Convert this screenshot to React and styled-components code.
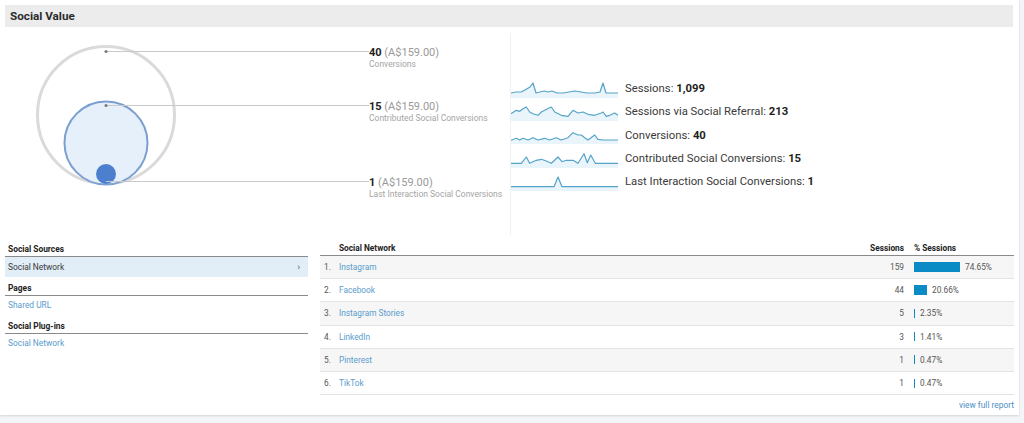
import React from "react";
import styled, { createGlobalStyle } from "styled-components";

const GlobalStyle = createGlobalStyle`
  html, body {
    margin: 0;
    padding: 0;
    background: #f3f5f8;
    font-family: Roboto, "Liberation Sans", Arial, sans-serif;
    color: #333;
  }
`;

const sparklines = [
  {
    label: "Sessions",
    value: "1,099",
    pts: [[0,13],[5,12],[10,12],[14,10],[19,7],[22,3],[25,13],[29,12],[33,11],[37,12],[41,11],[46,13],[52,13],[58,12],[64,11],[70,12],[76,13],[84,13],[89,12],[92,3],[95,13],[107,13]],
  },
  {
    label: "Sessions via Social Referral",
    value: "213",
    pts: [[0,10.7],[5.3,7.3],[8.7,8.3],[12,5.7],[15.3,4],[18.7,9],[22,10.7],[27,12.3],[30.3,9],[33.7,7.3],[38.7,4.7],[40.3,4],[43.7,9],[50.3,12.3],[57,13.3],[62,7.3],[67,10],[72,9],[77,11.3],[83.7,12.3],[90.3,10],[92,9],[95.3,13.3],[98.7,12.3],[103.7,10],[107,12.3]],
  },
  {
    label: "Conversions",
    value: "40",
    pts: [[0,14.3],[5.3,12.3],[8.7,14],[12,12.3],[17,14],[22,11.7],[27,14],[33.7,12.3],[38.7,14],[45.3,11.7],[50.3,14],[57,11.7],[62,6.7],[67,9],[70.3,9],[73.7,11.7],[77,14],[83.7,9],[87,13.3],[92,14],[107,14]],
  },
  {
    label: "Contributed Social Conversions",
    value: "15",
    pts: [[0,13.3],[10.3,13.3],[15.3,7],[18.7,13.3],[25.3,10.3],[30.3,9.3],[35.3,11],[40.3,13.3],[47,7],[51,11.7],[55.3,10.3],[62,10.3],[67,13.3],[73,3.7],[76.3,12.7],[79.7,5],[84.3,13.3],[107,13.3]],
  },
  {
    label: "Last Interaction Social Conversions",
    value: "1",
    pts: [[0,13.7],[43,13.7],[47,4],[51,13.7],[107,13.7]],
  },
];

const networks = [
  { name: "Instagram", sessions: 159, pct: 74.65 },
  { name: "Facebook", sessions: 44, pct: 20.66 },
  { name: "Instagram Stories", sessions: 5, pct: 2.35 },
  { name: "LinkedIn", sessions: 3, pct: 1.41 },
  { name: "Pinterest", sessions: 1, pct: 0.47 },
  { name: "TikTok", sessions: 1, pct: 0.47 },
];

const Page = styled.div`
  width: 1024px;
  height: 423px;
  overflow: hidden;
`;

const Card = styled.div`
  width: 1019px;
  height: 415px;
  background: #fff;
  box-shadow: 0 1px 2px rgba(0, 0, 0, 0.14);
  display: flex;
  flex-direction: column;
`;

const Header = styled.div`
  margin: 5px 6px 0 5px;
  height: 22px;
  background: #ececec;
  padding-left: 5px;
  font-size: 11.7px;
  font-weight: 700;
  line-height: 22px;
  color: #2b2b2b;
`;

const Top = styled.div`
  display: flex;
  height: 211px;
`;

const Diagram = styled.div`
  width: 510px;
  display: flex;
`;

const Callouts = styled.div`
  display: flex;
  flex-direction: column;
`;

const Callout = styled.div`
  margin-top: ${(p) => p.$top}px;
  height: 23px;
`;

const CalloutValue = styled.div`
  font-size: 11px;
  line-height: 12px;
  color: #9a9a9a;
  b {
    color: #222;
    font-weight: 700;
  }
`;

const CalloutLabel = styled.div`
  font-size: 8.5px;
  line-height: 11px;
  color: #a5a5a5;
`;

const Divider = styled.div`
  width: 1px;
  margin: 6px 0 3px;
  background: #f0f0f0;
`;

const Sparks = styled.div`
  display: flex;
  flex-direction: column;
  padding-top: 50px;
`;

const SparkRow = styled.div`
  display: flex;
  align-items: center;
  height: 23.3px;
  gap: 7px;
`;

const SparkLabel = styled.span`
  font-size: 11.3px;
  color: #3a3a3a;
  b {
    color: #1e1e1e;
    font-weight: 700;
  }
`;

const Bottom = styled.div`
  display: flex;
  padding: 0 5px;
  gap: 12px;
`;

const Sources = styled.div`
  width: 303px;
  display: flex;
  flex-direction: column;
`;

const SectionTitle = styled.div`
  padding: 4px 0 0 3px;
  font-size: 8.4px;
  font-weight: 700;
  line-height: 14px;
  color: #222;
  border-bottom: 1px solid #8a8a8a;
`;

const SelectedRow = styled.div`
  display: flex;
  justify-content: space-between;
  align-items: center;
  height: 20px;
  padding: 0 8px 0 3px;
  background: #e1edf7;
  font-size: 8.4px;
  color: #3a3a3a;
`;

const LinkRow = styled.div`
  height: 19px;
  line-height: 19px;
  padding-left: 3px;
  font-size: 8.4px;
  color: #5a9ccc;
`;

const Table = styled.div`
  flex: 1;
  display: flex;
  flex-direction: column;
`;

const Grid = styled.div`
  display: grid;
  grid-template-columns: 19px 1fr 80px 100px;
  align-items: center;
  height: ${(p) => (p.$head ? 18 : 23.2)}px;
  box-sizing: border-box;
  border-bottom: 1px solid ${(p) => (p.$head ? "#8a8a8a" : "#e4e4e4")};
  background: ${(p) => (p.$shade ? "#f6f6f6" : "#fff")};
  font-size: 8.3px;
  font-weight: ${(p) => (p.$head ? 700 : 400)};
  color: ${(p) => (p.$head ? "#222" : "#555")};
  padding-top: ${(p) => (p.$head ? 3 : 0)}px;
`;

const Index = styled.span`
  padding-left: 4px;
`;

const Name = styled.span`
  color: ${(p) => (p.$link ? "#5a9ccc" : "inherit")};
`;

const Num = styled.span`
  text-align: right;
  padding-right: 10px;
`;

const Pct = styled.span`
  display: flex;
  align-items: center;
  gap: 5px;
`;

const Bar = styled.span`
  display: inline-block;
  height: ${(p) => (p.$thin ? 9 : 10)}px;
  background: #0a8bc6;
`;

const Footer = styled.div`
  text-align: right;
  font-size: 8.4px;
  color: #4f8fc6;
  padding-top: 5px;
`;

function Venn() {
  return (
    <svg width="369" height="211" viewBox="0 0 369 211">
      <circle cx="106" cy="88" r="68.5" fill="#fff" stroke="#dadada" strokeWidth="3" />
      <circle cx="106" cy="116" r="41.5" fill="#e5f0fb" stroke="#7c9fd1" strokeWidth="2" />
      <circle cx="106" cy="147" r="10" fill="#4c80cf" />
      <line x1="106" y1="24.5" x2="369" y2="24.5" stroke="#c9c9c9" strokeWidth="1" />
      <line x1="106" y1="78.5" x2="369" y2="78.5" stroke="#c9c9c9" strokeWidth="1" />
      <line x1="106" y1="154.5" x2="369" y2="154.5" stroke="#c9c9c9" strokeWidth="1" />
      <circle cx="106" cy="24.5" r="1.5" fill="#777" />
      <circle cx="106" cy="78.5" r="1.5" fill="#777" />
    </svg>
  );
}

function Spark({ pts }) {
  const line = pts.map(([x, y], i) => `${i ? "L" : "M"}${x} ${y}`).join(" ");
  const area = `${line} L107 18 L0 18 Z`;
  return (
    <svg width="107" height="18" viewBox="0 0 107 18">
      <path d={area} fill="#eaf5fb" />
      <path d={line} fill="none" stroke="#55a3c8" strokeWidth="1.2" strokeLinejoin="round" />
    </svg>
  );
}

export default function App() {
  return (
    <Page>
      <GlobalStyle />
      <Card>
        <Header>Social Value</Header>
        <Top>
          <Diagram>
            <Venn />
            <Callouts>
              <Callout $top={20}>
                <CalloutValue><b>40</b> (A$159.00)</CalloutValue>
                <CalloutLabel>Conversions</CalloutLabel>
              </Callout>
              <Callout $top={31}>
                <CalloutValue><b>15</b> (A$159.00)</CalloutValue>
                <CalloutLabel>Contributed Social Conversions</CalloutLabel>
              </Callout>
              <Callout $top={53}>
                <CalloutValue><b>1</b> (A$159.00)</CalloutValue>
                <CalloutLabel>Last Interaction Social Conversions</CalloutLabel>
              </Callout>
            </Callouts>
          </Diagram>
          <Divider />
          <Sparks>
            {sparklines.map((s) => (
              <SparkRow key={s.label}>
                <Spark pts={s.pts} />
                <SparkLabel>
                  {s.label}: <b>{s.value}</b>
                </SparkLabel>
              </SparkRow>
            ))}
          </Sparks>
        </Top>
        <Bottom>
          <Sources>
            <SectionTitle>Social Sources</SectionTitle>
            <SelectedRow>
              <span>Social Network</span>
              <span>›</span>
            </SelectedRow>
            <SectionTitle>Pages</SectionTitle>
            <LinkRow>Shared URL</LinkRow>
            <SectionTitle>Social Plug-ins</SectionTitle>
            <LinkRow>Social Network</LinkRow>
          </Sources>
          <Table>
            <Grid $head>
              <Index />
              <Name>Social Network</Name>
              <Num>Sessions</Num>
              <Pct>% Sessions</Pct>
            </Grid>
            {networks.map((n, i) => (
              <Grid key={n.name} $shade={i % 2 === 0}>
                <Index>{i + 1}.</Index>
                <Name $link>{n.name}</Name>
                <Num>{n.sessions}</Num>
                <Pct>
                  <Bar $thin={n.pct < 5} style={{ width: Math.max(1, Math.round(n.pct * 0.62)) }} />
                  {n.pct.toFixed(2)}%
                </Pct>
              </Grid>
            ))}
            <Footer>view full report</Footer>
          </Table>
        </Bottom>
      </Card>
    </Page>
  );
}
